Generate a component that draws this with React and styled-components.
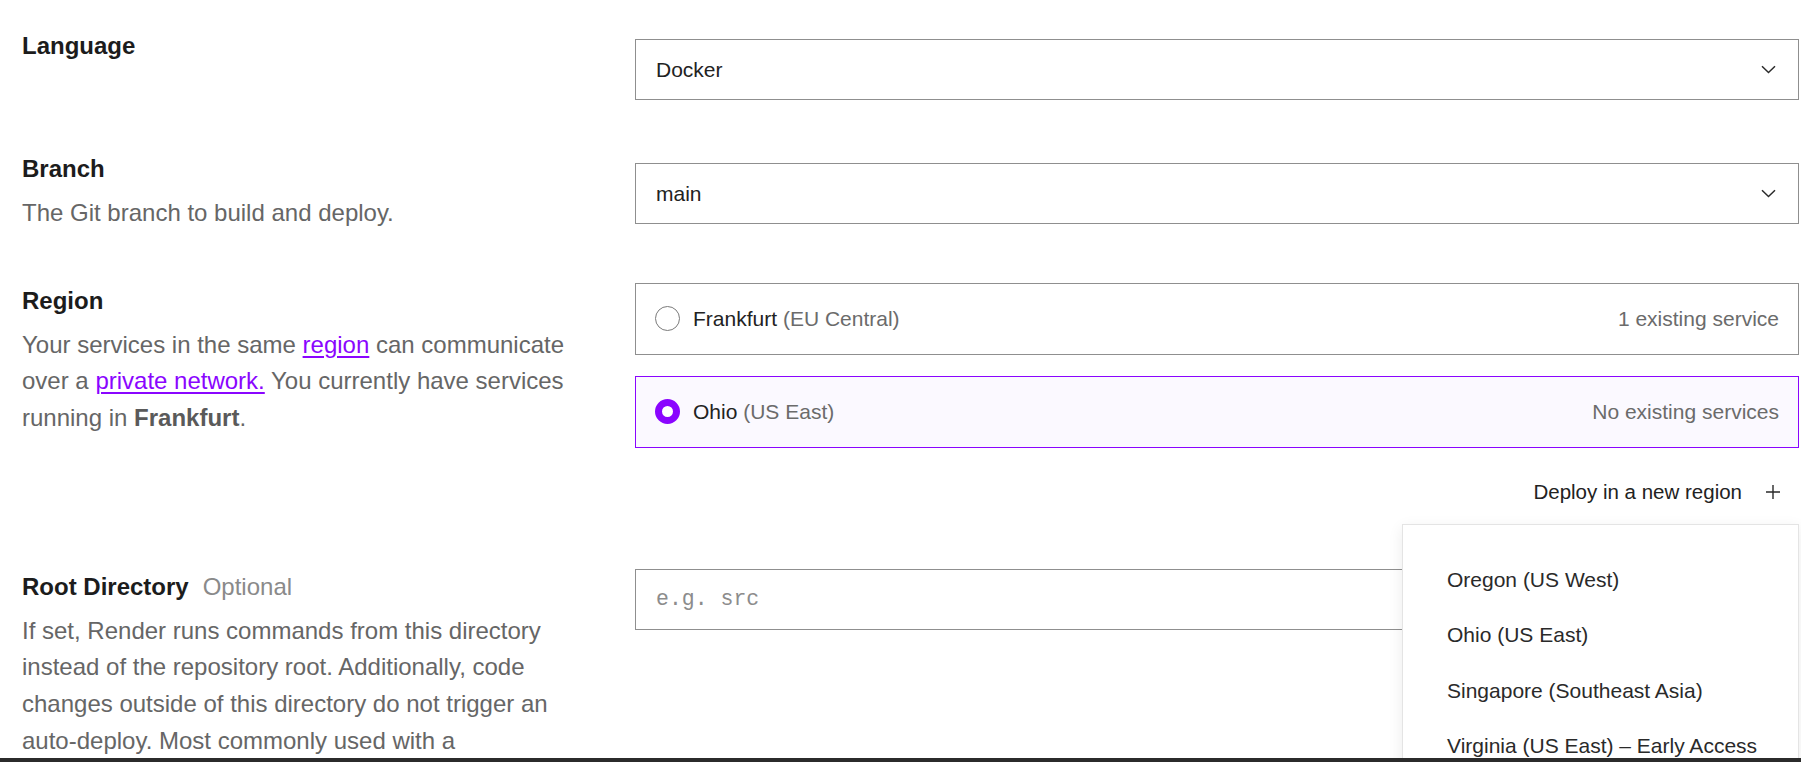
import React from "react";
import styled, { createGlobalStyle } from "styled-components";

const GlobalStyle = createGlobalStyle`
  html, body {
    margin: 0;
    padding: 0;
    background: #ffffff;
    overflow: hidden;
  }
  body {
    font-family: "Liberation Sans", Arial, sans-serif;
    color: #222222;
  }
`;

const Page = styled.div`
  padding: 28px 2px 0 22px;
  display: flex;
  flex-direction: column;
  gap: 51px;
  height: 762px;
  box-sizing: border-box;
`;

const Row = styled.section`
  display: grid;
  grid-template-columns: 548px 1fr;
  column-gap: 65px;
  align-items: start;
`;

const Info = styled.div`
  display: flex;
  flex-direction: column;
`;

const Label = styled.div`
  display: flex;
  align-items: baseline;
  gap: 14px;
  font-size: 24px;
  line-height: 36px;
  font-weight: 700;
  color: #1c1c1c;
  margin-bottom: 8px;
`;

const Optional = styled.span`
  font-weight: 400;
  color: #8a8a8a;
`;

const Description = styled.p`
  margin: 0;
  font-size: 24px;
  line-height: 36.7px;
  color: #666666;

  b {
    color: #5a5a5a;
    font-weight: 700;
  }
`;

const Link = styled.a`
  color: #8a05ff;
  text-decoration: underline;
  text-underline-offset: 3px;
  text-decoration-thickness: 1.5px;
`;

const Control = styled.div`
  position: relative;
  padding-top: ${(p) => p.$offset || 0}px;
`;

const SelectBox = styled.div`
  height: 61px;
  box-sizing: border-box;
  border: 1px solid #8f8f8f;
  display: flex;
  align-items: center;
  justify-content: space-between;
  padding: 0 22px 0 20px;
  font-size: 21px;
  color: #222222;
`;

const TextInput = styled.div`
  height: 61px;
  box-sizing: border-box;
  border: 1px solid #8f8f8f;
  display: flex;
  align-items: center;
  padding: 0 20px;
  font-family: "Liberation Mono", "DejaVu Sans Mono", monospace;
  font-size: 21.5px;
  color: #8c8c8c;
`;

const RegionList = styled.div`
  display: flex;
  flex-direction: column;
  gap: 21px;
`;

const RegionCard = styled.label`
  height: 72px;
  box-sizing: border-box;
  display: flex;
  align-items: center;
  gap: 13px;
  padding: 0 19px;
  border: 1px solid ${(p) => (p.$selected ? "#8a05ff" : "#8f8f8f")};
  background: ${(p) => (p.$selected ? "#fbf9ff" : "#ffffff")};
  font-size: 21px;
`;

const Radio = styled.span`
  width: 25px;
  height: 25px;
  box-sizing: border-box;
  border-radius: 50%;
  flex: none;
  border: ${(p) => (p.$checked ? "7.5px solid #8a05ff" : "1.3px solid #7a7a7a")};
  background: #ffffff;
`;

const RegionName = styled.span`
  flex: 1;
  color: #222222;
`;

const RegionArea = styled.span`
  color: #6b6b6b;
`;

const RegionCount = styled.span`
  color: #6b6b6b;
`;

const DeployRow = styled.div`
  margin: 24px 0 6px;
  height: 40px;
  display: flex;
  align-items: center;
  justify-content: flex-end;
  gap: 24px;
  padding-right: 19px;
  font-size: 20.5px;
  color: #222222;
`;

const Dropdown = styled.ul`
  position: absolute;
  top: 241px;
  left: 767px;
  right: 0;
  height: 320px;
  margin: 0;
  padding: 27px 0 0 44px;
  list-style: none;
  background: #ffffff;
  border: 1px solid #e4e4e4;
  box-shadow: 0 4px 14px rgba(0, 0, 0, 0.08);
  z-index: 2;
`;

const DropdownItem = styled.li`
  height: 55.5px;
  line-height: 55.5px;
  font-size: 21px;
  color: #2a2a2a;
  white-space: nowrap;
`;

const BottomBar = styled.div`
  position: fixed;
  left: 0;
  right: 0;
  bottom: 0;
  height: 4px;
  background: #2b2b2b;
  z-index: 5;
`;

const Chevron = () => (
  <svg width="15" height="9" viewBox="0 0 15 9" fill="none">
    <path d="M1 1.2 L7.5 7.5 L14 1.2" stroke="#2a2a2a" strokeWidth="1.5" />
  </svg>
);

const Plus = () => (
  <svg width="14" height="14" viewBox="0 0 14 14" fill="none">
    <path d="M7 0 V14 M0 7 H14" stroke="#2a2a2a" strokeWidth="1.4" />
  </svg>
);

const regions = [
  { name: "Frankfurt", area: "EU Central", count: "1 existing service", selected: false },
  { name: "Ohio", area: "US East", count: "No existing services", selected: true },
];

const newRegions = [
  "Oregon (US West)",
  "Ohio (US East)",
  "Singapore (Southeast Asia)",
  "Virginia (US East) – Early Access",
];

const App = () => {
  return (
    <>
      <GlobalStyle />
      <Page>
        <Row>
          <Info>
            <Label>Language</Label>
          </Info>
          <Control $offset={11}>
            <SelectBox>
              <span>Docker</span>
              <Chevron />
            </SelectBox>
          </Control>
        </Row>

        <Row>
          <Info>
            <Label>Branch</Label>
            <Description>The Git branch to build and deploy.</Description>
          </Info>
          <Control $offset={12}>
            <SelectBox>
              <span>main</span>
              <Chevron />
            </SelectBox>
          </Control>
        </Row>

        <Row>
          <Info>
            <Label>Region</Label>
            <Description>
              Your services in the same <Link href="#">region</Link> can
              communicate over a <Link href="#">private network.</Link> You
              currently have services running in <b>Frankfurt</b>.
            </Description>
          </Info>
          <Control>
            <RegionList>
              {regions.map((r) => (
                <RegionCard key={r.name} $selected={r.selected}>
                  <Radio $checked={r.selected} />
                  <RegionName>
                    {r.name} <RegionArea>({r.area})</RegionArea>
                  </RegionName>
                  <RegionCount>{r.count}</RegionCount>
                </RegionCard>
              ))}
            </RegionList>
            <DeployRow>
              <span>Deploy in a new region</span>
              <Plus />
            </DeployRow>
            <Dropdown>
              {newRegions.map((r) => (
                <DropdownItem key={r}>{r}</DropdownItem>
              ))}
            </Dropdown>
          </Control>
        </Row>

        <Row>
          <Info>
            <Label>
              Root Directory <Optional>Optional</Optional>
            </Label>
            <Description>
              If set, Render runs commands from this directory instead of the
              repository root. Additionally, code changes outside of this
              directory do not trigger an auto-deploy. Most commonly used with
              a monorepo.
            </Description>
          </Info>
          <Control>
            <TextInput>e.g. src</TextInput>
          </Control>
        </Row>
      </Page>
      <BottomBar />
    </>
  );
};

export default App;
